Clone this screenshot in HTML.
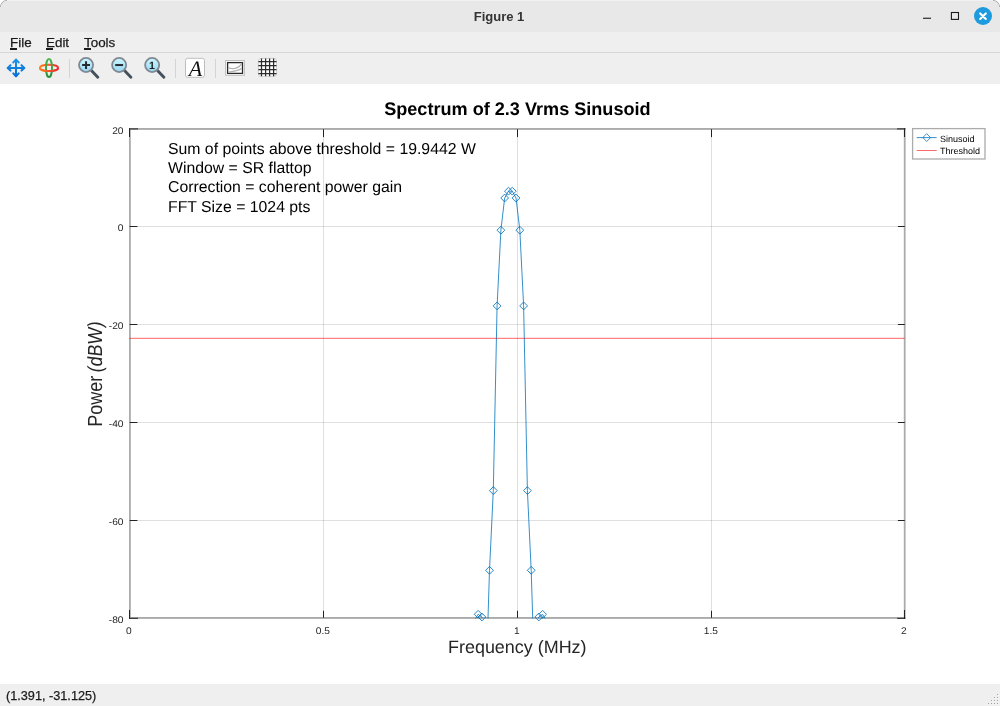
<!DOCTYPE html>
<html><head><meta charset="utf-8"><title>Figure 1</title>
<style>
html,body{margin:0;padding:0;background:#fff;}
body{width:1000px;height:706px;overflow:hidden;position:relative;font-family:"Liberation Sans",sans-serif;}
#win{position:absolute;left:0;top:0;width:1000px;height:706px;background:#efefef;border-radius:7px 7px 0 0;overflow:hidden;}
#titlebar{position:absolute;left:0;top:0;width:1000px;height:32px;background:#e8e8e8;border-radius:7px 7px 0 0;box-shadow:inset 0 1px 0 #f1f1f1;}
#title{position:absolute;left:0;width:998px;top:9px;text-align:center;font-weight:bold;font-size:13px;line-height:16px;color:#333;}
#menubar{position:absolute;left:0;top:32px;width:1000px;height:20px;background:#efefef;border-bottom:1px solid #d6d6d6;}
.mi{position:absolute;top:3px;font-size:13.4px;line-height:15px;color:#1a1a1a;-webkit-text-stroke:0.25px #1a1a1a;}
.mi u{text-decoration:none;}
.ul{position:absolute;top:16.3px;height:1.5px;background:#1a1a1a;display:block;}
#toolbar{position:absolute;left:0;top:53px;width:1000px;height:31px;background:#efefef;}
#canvas{position:absolute;left:0;top:84px;width:1000px;height:600px;background:#fff;}
#status{position:absolute;left:0;top:684px;width:1000px;height:22px;background:#efefef;}
#status span{position:absolute;left:6px;top:5px;font-size:12.7px;line-height:15px;color:#1a1a1a;-webkit-text-stroke:0.25px #1a1a1a;}
svg text{font-family:"Liberation Sans",sans-serif;text-rendering:geometricPrecision;}
svg,.mi,#title,#status span{will-change:transform;}
</style></head><body>
<div id="win">
<div id="titlebar"><div id="title">Figure 1</div>
<svg width="1000" height="32" style="position:absolute;left:0;top:0">
<rect x="923" y="17.7" width="8" height="1.1" fill="#1a1a1a"/>
<rect x="951.4" y="12.5" width="7.1" height="6.9" fill="none" stroke="#1a1a1a" stroke-width="1.1"/>
<circle cx="983" cy="16" r="9" fill="#1e9bde"/>
<path d="M980.2 13.4L985.8 19M985.8 13.4L980.2 19" stroke="#fff" stroke-width="2.1" stroke-linecap="round"/>
<path d="M0.3 7A6.6 6.6 0 0 1 6.9 0.3M993.1 0.3A6.6 6.6 0 0 1 999.7 7" fill="none" stroke="#9c9c9c" stroke-width="1"/>
</svg></div>
<div id="menubar">
<span class="mi" style="left:10px"><u>F</u>ile</span>
<span class="mi" style="left:46px"><u>E</u>dit</span>
<span class="mi" style="left:84px"><u>T</u>ools</span>
<i class="ul" style="left:10.4px;width:6.3px"></i><i class="ul" style="left:46.2px;width:7px"></i><i class="ul" style="left:84.2px;width:6.8px"></i>
</div>
<div id="toolbar">
<svg width="1000" height="31" viewBox="0 53 1000 31" style="position:absolute;left:0;top:0">
<defs>
<linearGradient id="gb" x1="0" y1="0" x2="0" y2="1"><stop offset="0" stop-color="#1a92e6"/><stop offset="1" stop-color="#086dd8"/></linearGradient>
<linearGradient id="gr" gradientUnits="userSpaceOnUse" x1="39" y1="66" x2="59" y2="70"><stop offset="0" stop-color="#ff8518"/><stop offset="1" stop-color="#ee2538"/></linearGradient>
<linearGradient id="gr2" gradientUnits="userSpaceOnUse" x1="39" y1="66" x2="59" y2="70"><stop offset="0" stop-color="#ff8518"/><stop offset="1" stop-color="#ee2538"/></linearGradient>
<linearGradient id="gg" x1="0" y1="0" x2="0" y2="1"><stop offset="0" stop-color="#45b649"/><stop offset="1" stop-color="#2e8f3a"/></linearGradient>
<linearGradient id="gl" x1="0" y1="0" x2="0" y2="1"><stop offset="0" stop-color="#ccf7fd"/><stop offset="1" stop-color="#97d7f4"/></linearGradient>
</defs>
<!-- pan -->
<g stroke="url(#gb)" stroke-width="2.05" fill="none" stroke-linecap="round" stroke-linejoin="round">
<path d="M16 59.7V76.1M7.8 67.9H24.2"/>
<path d="M13.3 62.4L16 59.6L18.7 62.4M13.3 73.4L16 76.2L18.7 73.4M10.5 65.2L7.7 67.9L10.5 70.6M21.5 65.2L24.3 67.9L21.5 70.6"/>
</g>
<!-- rotate -->
<ellipse cx="49" cy="67.9" rx="9.1" ry="3.1" fill="none" stroke="url(#gr)" stroke-width="1.9"/>
<ellipse cx="49" cy="67.95" rx="3" ry="9.05" fill="none" stroke="url(#gg)" stroke-width="1.9"/>
<path d="M39.9 67.9A9.1 3.1 0 0 0 58.1 67.9" fill="none" stroke="url(#gr2)" stroke-width="1.9"/>
<rect x="69" y="59" width="1" height="19" fill="#d4d4d4"/>
<!-- zoom in -->
<g>
<path d="M91.4 70.6L97.8 77.3" stroke="#44505b" stroke-width="2.9" stroke-linecap="round"/>
<circle cx="86.05" cy="65" r="7.05" fill="url(#gl)" stroke="#7f8993" stroke-width="1.8"/>
</g>
<path d="M82.1 65.05H90M86.05 61.2V68.9" stroke="#262a31" stroke-width="2"/>
<g transform="translate(33.1,0)"><path d="M91.4 70.6L97.8 77.3" stroke="#44505b" stroke-width="2.9" stroke-linecap="round"/>
<circle cx="86.05" cy="65" r="7.05" fill="url(#gl)" stroke="#7f8993" stroke-width="1.8"/></g>
<path d="M115.2 65.05H123.1" stroke="#262a31" stroke-width="2"/>
<g transform="translate(66.1,0)"><path d="M91.4 70.6L97.8 77.3" stroke="#44505b" stroke-width="2.9" stroke-linecap="round"/>
<circle cx="86.05" cy="65" r="7.05" fill="url(#gl)" stroke="#7f8993" stroke-width="1.8"/></g>
<text x="151.9" y="68.8" text-anchor="middle" font-size="10.6" font-weight="bold" fill="#1d1d1f" style="font-family:'Liberation Sans',sans-serif">1</text>
<rect x="175" y="59" width="1" height="19" fill="#d4d4d4"/>
<!-- A -->
<rect x="185.5" y="58.3" width="19" height="19" rx="2.2" fill="#fff" stroke="#bdbdbd" stroke-width="1"/>
<text x="195.4" y="75.9" text-anchor="middle" font-size="22" font-style="italic" style="font-family:'Liberation Serif',serif" fill="#111">A</text>
<rect x="215" y="59" width="1" height="19" fill="#d4d4d4"/>
<!-- axes -->
<rect x="225.6" y="60.5" width="18.8" height="14.8" fill="#fff" stroke="#bdbdbd" stroke-width="1"/>
<rect x="227.6" y="62.6" width="14.9" height="10.8" fill="#fff" stroke="#2b2b2e" stroke-width="1.3"/>
<path d="M228.3 67.6C232 69.6 238.5 69 241.8 63.6M228.3 72.2C233 71.6 238.5 70.6 241.8 68.4" stroke="#b4b4b4" stroke-width="1.3" fill="none"/>
<!-- grid -->
<rect x="258.4" y="58.4" width="18.1" height="17.9" rx="2.4" fill="#fff" stroke="#c9c9c9" stroke-width="0.9"/>
<path d="M261.5 58.4V76.3M265.6 58.4V76.3M269.6 58.4V76.3M273.6 58.4V76.3M258.4 61.5H276.5M258.4 65.5H276.5M258.4 69.5H276.5M258.4 73.5H276.5" stroke="#2b2b2e" stroke-width="1.25"/>
</svg>
</div>
<div id="canvas">
<svg width="1000" height="600" viewBox="0 84 1000 600" style="position:absolute;left:0;top:0">
<defs><clipPath id="cp"><rect x="129.5" y="129" width="775" height="489.4"/></clipPath></defs>
<!-- axes box -->
<g fill="#ababab">
<rect x="129" y="128" width="776.6" height="1.9"/>
<rect x="129" y="617" width="776.6" height="1.9"/>
<rect x="129" y="128" width="1.8" height="491"/>
<rect x="903.8" y="128" width="1.8" height="491"/>
</g>
<rect x="323" y="129" width="1" height="489" fill="rgba(38,38,38,0.15)"/><rect x="517" y="129" width="1" height="489" fill="rgba(38,38,38,0.15)"/><rect x="711" y="129" width="1" height="489" fill="rgba(38,38,38,0.15)"/><rect x="129" y="226" width="776" height="1" fill="rgba(38,38,38,0.15)"/><rect x="129" y="324" width="776" height="1" fill="rgba(38,38,38,0.15)"/><rect x="129" y="422" width="776" height="1" fill="rgba(38,38,38,0.15)"/><rect x="129" y="520" width="776" height="1" fill="rgba(38,38,38,0.15)"/>
<g fill="#222"><rect x="129" y="610" width="1" height="8.8" /><rect x="129" y="128.3" width="1" height="8.7" /><rect x="323" y="610.8" width="1" height="6.9" /><rect x="323" y="129.3" width="1" height="7.8" /><rect x="517" y="610.8" width="1" height="6.9" /><rect x="517" y="129.3" width="1" height="7.8" /><rect x="711" y="610.8" width="1" height="6.9" /><rect x="711" y="129.3" width="1" height="7.8" /><rect x="904" y="610" width="1" height="8.8" /><rect x="904" y="128.3" width="1" height="8.7" /><rect x="129" y="128.4" width="9" height="1" /><rect x="897.1" y="128.4" width="8.2" height="1" /><rect x="129.9" y="226" width="7.5" height="1" /><rect x="897.9" y="226" width="6.8" height="1" /><rect x="129.9" y="324" width="7.5" height="1" /><rect x="897.9" y="324" width="6.8" height="1" /><rect x="129.9" y="422" width="7.5" height="1" /><rect x="897.9" y="422" width="6.8" height="1" /><rect x="129.9" y="520" width="7.5" height="1" /><rect x="897.9" y="520" width="6.8" height="1" /><rect x="129" y="617.8" width="9" height="1" /><rect x="897.1" y="617.8" width="8.2" height="1" /></g>
<g font-size="9.7" fill="#262626"><text transform="translate(128.9,633.9) scale(1.05,1)" text-anchor="middle">0</text><text transform="translate(322.9,633.9) scale(1.05,1)" text-anchor="middle">0.5</text><text transform="translate(516.9,633.9) scale(1.05,1)" text-anchor="middle">1</text><text transform="translate(710.9,633.9) scale(1.05,1)" text-anchor="middle">1.5</text><text transform="translate(903.9,633.9) scale(1.05,1)" text-anchor="middle">2</text><text transform="translate(123.5,133.8) scale(1.05,1)" text-anchor="end">20</text><text transform="translate(123.5,231.0) scale(1.05,1)" text-anchor="end">0</text><text transform="translate(123.5,329.4) scale(1.05,1)" text-anchor="end">-20</text><text transform="translate(123.5,427.2) scale(1.05,1)" text-anchor="end">-40</text><text transform="translate(123.5,525.0) scale(1.05,1)" text-anchor="end">-60</text><text transform="translate(123.5,622.8) scale(1.05,1)" text-anchor="end">-80</text></g>
<!-- data -->
<g clip-path="url(#cp)"><polyline points="459.19,720.00 462.98,690.00 466.77,700.00 470.56,660.00 474.35,620.50 478.13,614.30 481.93,617.00 485.72,691.00 489.50,570.30 493.30,490.60 497.09,305.90 500.88,230.20 504.67,198.00 508.46,191.20 512.25,191.20 516.03,198.00 519.83,230.20 523.62,305.90 527.40,490.60 531.20,570.30 534.99,691.00 538.77,617.00 542.57,614.30 546.36,620.50 550.14,660.00 553.94,700.00 557.73,690.00 561.51,720.00" fill="none" stroke="#0072bd" stroke-width="0.8" stroke-linejoin="round"/></g>
<g fill="none" stroke="#0072bd" stroke-width="0.85"><path d="M478.13 610.40L482.03 614.30L478.13 618.20L474.24 614.30Z"/><path d="M481.93 613.10L485.82 617.00L481.93 620.90L478.03 617.00Z"/><path d="M489.50 566.40L493.40 570.30L489.50 574.20L485.61 570.30Z"/><path d="M493.30 486.70L497.19 490.60L493.30 494.50L489.40 490.60Z"/><path d="M497.09 302.00L500.99 305.90L497.09 309.80L493.19 305.90Z"/><path d="M500.88 226.30L504.77 230.20L500.88 234.10L496.98 230.20Z"/><path d="M504.67 194.10L508.56 198.00L504.67 201.90L500.77 198.00Z"/><path d="M508.46 187.30L512.36 191.20L508.46 195.10L504.56 191.20Z"/><path d="M512.25 187.30L516.14 191.20L512.25 195.10L508.35 191.20Z"/><path d="M516.03 194.10L519.93 198.00L516.03 201.90L512.13 198.00Z"/><path d="M519.83 226.30L523.73 230.20L519.83 234.10L515.93 230.20Z"/><path d="M523.62 302.00L527.51 305.90L523.62 309.80L519.72 305.90Z"/><path d="M527.40 486.70L531.30 490.60L527.40 494.50L523.50 490.60Z"/><path d="M531.20 566.40L535.10 570.30L531.20 574.20L527.30 570.30Z"/><path d="M538.77 613.10L542.67 617.00L538.77 620.90L534.88 617.00Z"/><path d="M542.57 610.40L546.47 614.30L542.57 618.20L538.67 614.30Z"/></g>
<rect x="129.5" y="337.78" width="775" height="1.2" fill="#ff0000" fill-opacity="0.5"/>
<!-- text -->
<text x="517.4" y="114.6" text-anchor="middle" font-size="18.1" font-weight="bold" fill="#000">Spectrum of 2.3 Vrms Sinusoid</text>
<text x="517.3" y="652.5" text-anchor="middle" font-size="17.95" fill="#262626">Frequency (MHz)</text>
<text transform="translate(102.3,373.1) rotate(-90) scale(1,1.13)" x="-53.7" font-size="18.05" fill="#262626">Power</text>
<text transform="translate(102.3,373.1) rotate(-90) scale(1,1.13) translate(0.1,0) skewX(-7)" font-size="18.05" fill="#262626">(dBW)</text>
<g font-size="15.8" fill="#000">
<text x="168" y="153.6">Sum of points above threshold = 19.9442 W</text>
<text x="168" y="173">Window = SR flattop</text>
<text x="168" y="192.4">Correction = coherent power gain</text>
<text x="168" y="211.8">FFT Size = 1024 pts</text>
</g>
<!-- legend -->
<rect x="912.6" y="128.6" width="72.4" height="30.4" fill="#fff" stroke="#ababab" stroke-width="1.3"/>
<path d="M916.7 137.6H936.7" stroke="#0072bd" stroke-width="0.8"/>
<path d="M926.7 133.7L930.6 137.6L926.7 141.5L922.8 137.6Z" fill="none" stroke="#0072bd" stroke-width="0.75"/>
<rect x="916.7" y="150" width="20" height="1" fill="#ff6b6b"/>
<g font-size="9" fill="#000">
<text x="940" y="141.5">Sinusoid</text>
<text x="940" y="153.8">Threshold</text>
</g>
</svg>
</div>
<div id="status"><span>(1.391, -31.125)</span><svg width="1000" height="22" style="position:absolute;left:0;top:0"><rect x="998" y="11" width="1" height="1" fill="#fbfbfb"/><rect x="997" y="10" width="1" height="1" fill="#a3a3a3"/><rect x="995" y="14" width="1" height="1" fill="#fbfbfb"/><rect x="994" y="13" width="1" height="1" fill="#a3a3a3"/><rect x="998" y="14" width="1" height="1" fill="#fbfbfb"/><rect x="997" y="13" width="1" height="1" fill="#a3a3a3"/><rect x="992" y="17" width="1" height="1" fill="#fbfbfb"/><rect x="991" y="16" width="1" height="1" fill="#a3a3a3"/><rect x="995" y="17" width="1" height="1" fill="#fbfbfb"/><rect x="994" y="16" width="1" height="1" fill="#a3a3a3"/><rect x="998" y="17" width="1" height="1" fill="#fbfbfb"/><rect x="997" y="16" width="1" height="1" fill="#a3a3a3"/><rect x="989" y="20" width="1" height="1" fill="#fbfbfb"/><rect x="988" y="19" width="1" height="1" fill="#a3a3a3"/><rect x="992" y="20" width="1" height="1" fill="#fbfbfb"/><rect x="991" y="19" width="1" height="1" fill="#a3a3a3"/><rect x="995" y="20" width="1" height="1" fill="#fbfbfb"/><rect x="994" y="19" width="1" height="1" fill="#a3a3a3"/><rect x="998" y="20" width="1" height="1" fill="#fbfbfb"/><rect x="997" y="19" width="1" height="1" fill="#a3a3a3"/></svg></div>
</div>
</body></html>
